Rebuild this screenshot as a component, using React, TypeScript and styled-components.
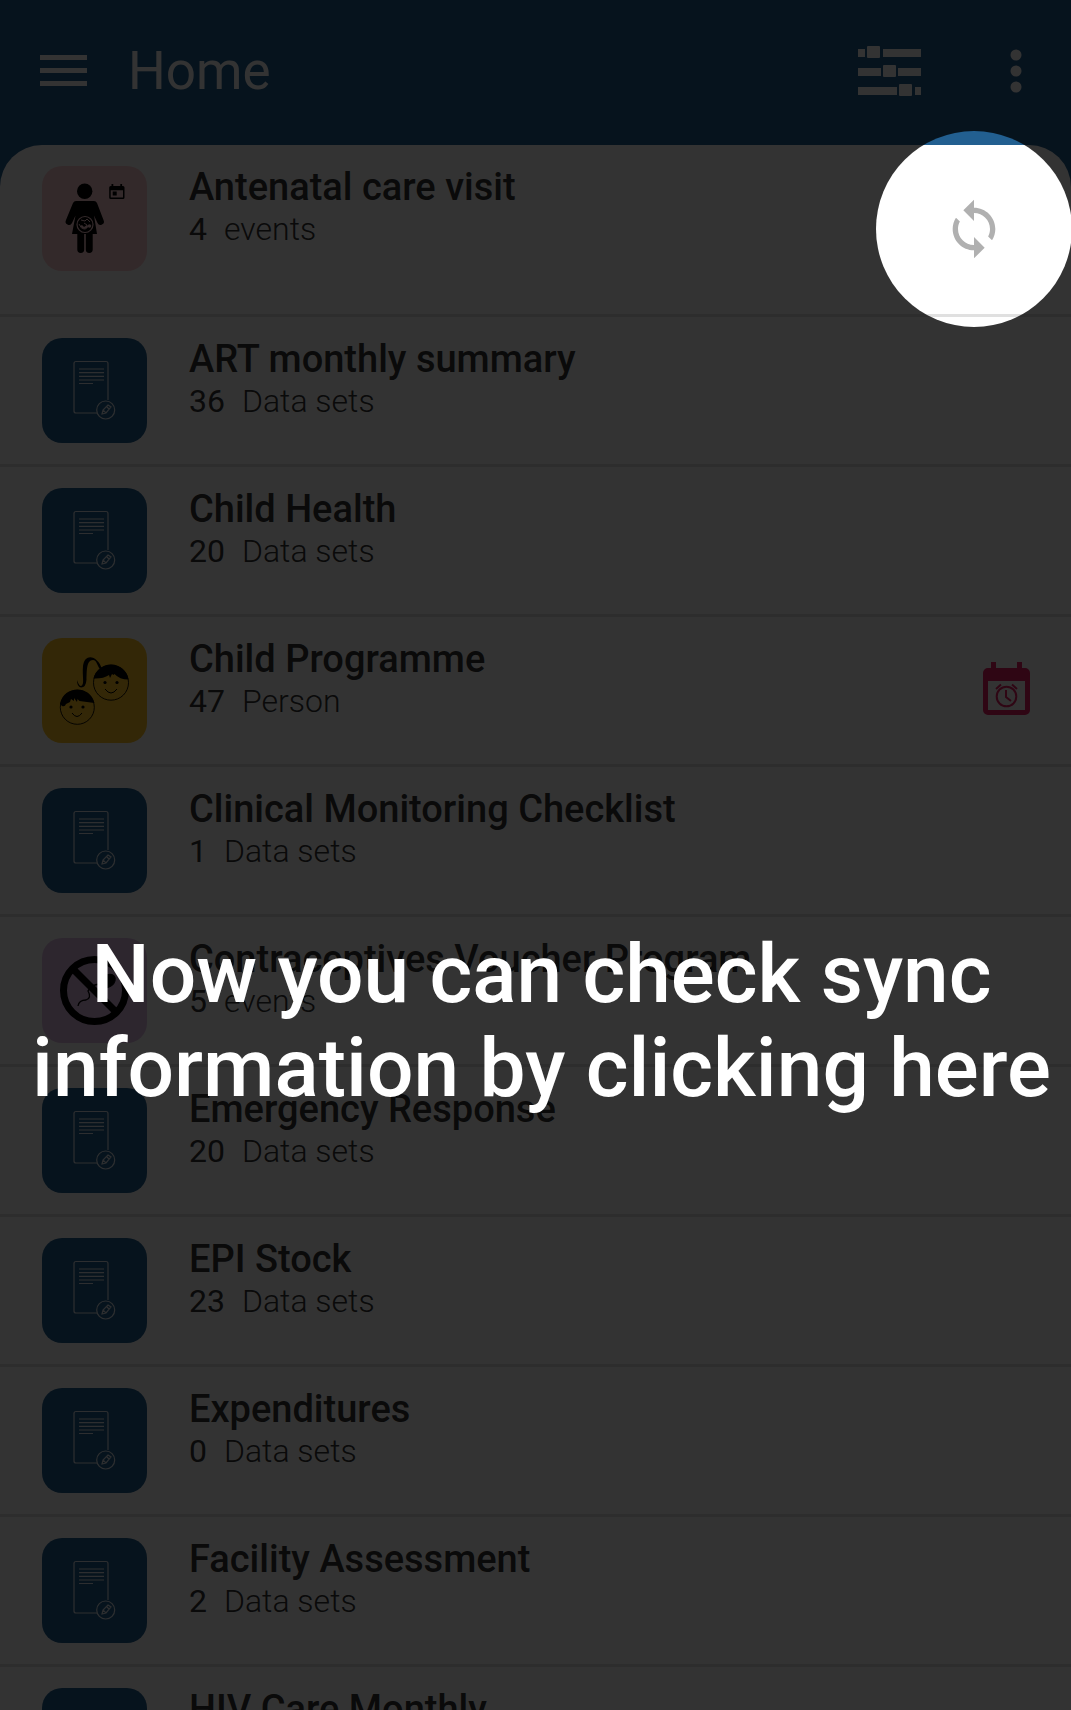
import React from "react";
import styled, { createGlobalStyle, css } from "styled-components";

const BLUE = "#225f90";

const GlobalStyle = createGlobalStyle`
  *, *::before, *::after { box-sizing: border-box; }
  body {
    margin: 0;
    background: ${BLUE};
    font-family: Roboto, "Liberation Sans", sans-serif;
    color: #333;
  }
`;

const Screen = styled.div`
  position: relative;
  height: 100vh;
  overflow: hidden;
  background: ${BLUE};
`;

const TopBar = styled.header`
  display: flex;
  align-items: center;
  height: 145px;
  padding: 0 40px 3px;
`;

const IconButton = styled.button`
  display: flex;
  padding: 0;
  border: 0;
  background: none;
  color: #fff;
  cursor: pointer;
`;

const PageTitle = styled.h1`
  flex: 1;
  margin: 0;
  padding-left: 41px;
  font-size: 53px;
  line-height: 60px;
  font-weight: 400;
  color: #fff;
`;

const Actions = styled.div`
  display: flex;
  align-items: center;
  gap: 80px;
`;

const ProgramList = styled.ul`
  margin: 0;
  padding: 0;
  min-height: calc(100vh - 145px);
  list-style: none;
  background: #fff;
  border-radius: 42px 42px 0 0;
`;

const Row = styled.li<{ $tall?: boolean }>`
  display: flex;
  align-items: center;
  gap: 42px;
  height: ${(p) => (p.$tall ? 172 : 150)}px;
  padding: 0 41px 0 42px;
  border-bottom: 3px solid #e0e0e0;
`;

const Tile = styled.div<{ $color: string }>`
  align-self: flex-start;
  flex: none;
  width: 105px;
  height: 105px;
  margin-top: 21px;
  border-radius: 20px;
  background: ${(p) => p.$color};
  svg { display: block; }
`;

const Details = styled.div`
  align-self: flex-start;
  flex: 1;
  min-width: 0;
  padding-top: 21px;
`;

const Name = styled.h2`
  margin: 0;
  font-size: 38px;
  line-height: 42px;
  font-weight: 500;
  white-space: nowrap;
`;

const Summary = styled.p`
  display: flex;
  gap: 17px;
  margin: 0;
  font-size: 32px;
  line-height: 42px;
  font-weight: 300;
`;

const Count = styled.span`
  font-weight: 400;
`;

/* The shadow dims everything outside the round highlight. */
const spotlight = css`
  &::after {
    content: "";
    position: absolute;
    z-index: 1;
    top: 50%;
    left: 50%;
    width: 196px;
    height: 196px;
    border-radius: 50%;
    transform: translate(-50%, -50%);
    box-shadow: 0 0 0 3000px rgba(0, 0, 0, 0.8);
    pointer-events: none;
  }
`;

const SyncButton = styled(IconButton)`
  position: relative;
  margin: 0 24px 2px 0;
  color: #b0b0b0;
  ${spotlight}
`;

const OverdueBadge = styled.span`
  display: flex;
  padding-bottom: 5px;
`;

const Hint = styled.div`
  position: absolute;
  z-index: 2;
  inset: 0;
  display: flex;
  align-items: center;
  justify-content: center;
  padding: 332px 8px 0 20px;
  pointer-events: none;
`;

const HintText = styled.p`
  margin: 0;
  font-size: 82px;
  line-height: 94px;
  font-weight: 500;
  text-align: center;
  color: #fff;
`;

const MenuIcon = () => (
  <svg width="47" height="32" viewBox="0 0 47 32" fill="currentColor" aria-hidden="true">
    <path d="M0 0h47v5H0zM0 13h47v5H0zM0 26h47v5H0z" />
  </svg>
);

const FilterIcon = () => (
  <svg width="63" height="50" viewBox="0 0 63 50" fill="currentColor" aria-hidden="true">
    <path d="M0 3h7v8H0zM25 3h38v8H25zM0 22h23v8H0zM40 22h23v8H40zM0 41h39v8H0zM57 41h6v8h-6z" />
    <rect x="9" y="0" width="13" height="12" rx="1" />
    <rect x="25" y="19" width="13" height="12" rx="1" />
    <rect x="41" y="38" width="13" height="12" rx="1" />
  </svg>
);

const MoreIcon = () => (
  <svg width="30" height="44" viewBox="0 0 30 44" fill="currentColor" aria-hidden="true">
    <circle cx="15" cy="6" r="5.5" />
    <circle cx="15" cy="22" r="5.5" />
    <circle cx="15" cy="38" r="5.5" />
  </svg>
);

const SyncIcon = () => (
  <svg width="64" height="64" viewBox="0 0 24 24" fill="currentColor" aria-hidden="true">
    <path d="M12 4V1L8 5l4 4V6c3.31 0 6 2.69 6 6 0 1.01-.25 1.97-.7 2.8l1.46 1.46C19.54 15.03 20 13.57 20 12c0-4.42-3.58-8-8-8zm0 14c-3.31 0-6-2.69-6-6 0-1.01.25-1.97.7-2.8L5.24 7.74C4.46 8.97 4 10.43 4 12c0 4.42 3.58 8 8 8v3l4-4-4-4v3z" />
  </svg>
);

const OverdueIcon = () => (
  <svg width="47" height="53" viewBox="0 0 47 53" role="img" aria-label="Overdue">
    <path
      fill="#e91e63"
      fillRule="evenodd"
      d="M8 0h5v6h21V0h5v6h3a5 5 0 0 1 5 5v37a5 5 0 0 1-5 5H5a5 5 0 0 1-5-5V11a5 5 0 0 1 5-5h3zM5 19v29h37V19z"
    />
    <g fill="none" stroke="#e91e63" strokeWidth="2">
      <circle cx="23.500" cy="34.500" r="9.800" />
      <path d="M23 28v7l5 4M13 27l5-4.500M29 22.500l5 4.500" />
    </g>
  </svg>
);

const FormArt = () => (
  <svg width="105" height="105" viewBox="0 0 105 105" fill="none" stroke="#fff" strokeWidth="1.200" aria-hidden="true">
    <g opacity="0.85">
      <path d="M55 75H34a2 2 0 0 1-2-2V25.500a2 2 0 0 1 2-2h30a2 2 0 0 1 2 2V62" />
      <path d="M37 31h25M37 34.700h25M37 38.300h25M37 42h25M37 45.500h14" />
      <circle cx="63.700" cy="72" r="9" />
      <path d="M60 76l1-4 5-5 3 2-5 6zM61 72l3 3M65 69l2 2" />
    </g>
  </svg>
);

const PregnantArt = () => (
  <svg width="105" height="105" viewBox="0 0 105 105" aria-hidden="true">
    <circle cx="42.700" cy="25.300" r="7.700" />
    <path d="M34 35h18q2 0 3 2l6.500 17a3.300 3.300 0 0 1-6 3L52 49.500 55 68H30l3.500-18.500-3.500 7.500a3.300 3.300 0 0 1-6-3L31 37q1-2 3-2z" />
    <path d="M35.300 66h6.900v17.500a3.400 3.400 0 0 1-6.900 0zM43.800 66h6.900v17.500a3.400 3.400 0 0 1-6.900 0z" />
    <g fill="none" stroke="#ffcdd2">
      <circle cx="43" cy="58.500" r="8" strokeWidth="1.200" />
      <path d="M37 58q2 5 5 5 4 0 3-4l-3-2M39 54l4 1 2-2 3 3" strokeWidth="1" />
    </g>
    <path d="M38 60q4 5 8 1l-1-2-3 2-2-2z" fill="#ffcdd2" />
    <circle cx="47.500" cy="60" r="1.800" fill="#ffcdd2" />
    <path
      fillRule="evenodd"
      d="M69.500 18h1.800v2h7v-2h1.800v2H81q1.500 0 1.500 1.500v10Q82.500 33 81 33H68.700q-1.500 0-1.500-1.500v-10q0-1.500 1.500-1.500h.8zM68.700 24.300v7.200H81v-7.200zM70.700 25.500h4v4h-4z"
    />
  </svg>
);

const ChildrenArt = () => (
  <svg width="105" height="105" viewBox="0 0 105 105" aria-hidden="true">
    <g fill="none" stroke="#000">
      <circle cx="69" cy="44.700" r="17.500" strokeWidth="0.900" />
      <circle cx="35.300" cy="69.300" r="17" strokeWidth="0.900" />
      <path d="M63 51q6 8 12 0M30 75q5 7 10 0" strokeWidth="1" />
    </g>
    <path d="M51.500 40.500a17.800 17.800 0 0 1 35 1q-9 0-14-5.500l-1 1-1.500-1-2 4-1-3q-6 4-15.500 3.500z" />
    <path d="M60 31C56 18 43 14 41 28c-1 10 2 19-2 20q-2 0-4-6 0 7 4 7.500 5 0 5.500-8C45 34 44 22 51 22c4 0 4 6 7 9z" />
    <path d="M18 66c4-19 30-19 34.500-1l-15-2-2-2-.5 3-3-4v3l-3-2-1 3-4 2q-1 3-4 2z" />
    <circle cx="63" cy="44.500" r="1.600" />
    <circle cx="75" cy="44.500" r="1.600" />
    <circle cx="29" cy="69" r="1.600" />
    <circle cx="41" cy="69" r="1.600" />
  </svg>
);

const ContraceptionArt = () => (
  <svg width="105" height="105" viewBox="0 0 105 105" fill="none" stroke="#000" aria-hidden="true">
    <circle cx="52.500" cy="52.500" r="31" strokeWidth="7" />
    <path d="M31 31l43 43" strokeWidth="7" />
    <path d="M60 46q-12 0-14 7 4 7-2 9-7 0-8 6" strokeWidth="1.300" />
    <ellipse cx="66" cy="43" rx="8" ry="6" fill="#000" transform="rotate(-38 66 43)" />
  </svg>
);

const art = {
  form: { color: BLUE, Art: FormArt },
  pregnant: { color: "#ffcdd2", Art: PregnantArt },
  children: { color: "#ffc324", Art: ChildrenArt },
  contraception: { color: "#e1bee7", Art: ContraceptionArt },
};

type Program = {
  name: string;
  count?: number;
  unit?: string;
  kind?: keyof typeof art;
  syncing?: boolean;
  overdue?: boolean;
};

const programs: Program[] = [
  { name: "Antenatal care visit", count: 4, unit: "events", kind: "pregnant", syncing: true },
  { name: "ART monthly summary", count: 36, unit: "Data sets" },
  { name: "Child Health", count: 20, unit: "Data sets" },
  { name: "Child Programme", count: 47, unit: "Person", kind: "children", overdue: true },
  { name: "Clinical Monitoring Checklist", count: 1, unit: "Data sets" },
  { name: "Contraceptives Voucher Program", count: 5, unit: "events", kind: "contraception" },
  { name: "Emergency Response", count: 20, unit: "Data sets" },
  { name: "EPI Stock", count: 23, unit: "Data sets" },
  { name: "Expenditures", count: 0, unit: "Data sets" },
  { name: "Facility Assessment", count: 2, unit: "Data sets" },
  { name: "HIV Care Monthly" },
];

function ProgramRow({ name, count, unit, kind = "form", syncing, overdue }: Program) {
  const { color, Art } = art[kind];
  return (
    <Row $tall={syncing}>
      <Tile $color={color}>
        <Art />
      </Tile>
      <Details>
        <Name>{name}</Name>
        {count !== undefined && (
          <Summary>
            <Count>{count}</Count>
            <span>{unit}</span>
          </Summary>
        )}
      </Details>
      {syncing && (
        <SyncButton type="button" aria-label="Sync information">
          <SyncIcon />
        </SyncButton>
      )}
      {overdue && (
        <OverdueBadge>
          <OverdueIcon />
        </OverdueBadge>
      )}
    </Row>
  );
}

export default function App() {
  return (
    <Screen>
      <GlobalStyle />
      <TopBar>
        <IconButton type="button" aria-label="Menu">
          <MenuIcon />
        </IconButton>
        <PageTitle>Home</PageTitle>
        <Actions>
          <IconButton type="button" aria-label="Filter">
            <FilterIcon />
          </IconButton>
          <IconButton type="button" aria-label="More options">
            <MoreIcon />
          </IconButton>
        </Actions>
      </TopBar>
      <ProgramList>
        {programs.map((program) => (
          <ProgramRow key={program.name} {...program} />
        ))}
      </ProgramList>
      <Hint role="status">
        <HintText>Now you can check sync information by clicking here</HintText>
      </Hint>
    </Screen>
  );
}
